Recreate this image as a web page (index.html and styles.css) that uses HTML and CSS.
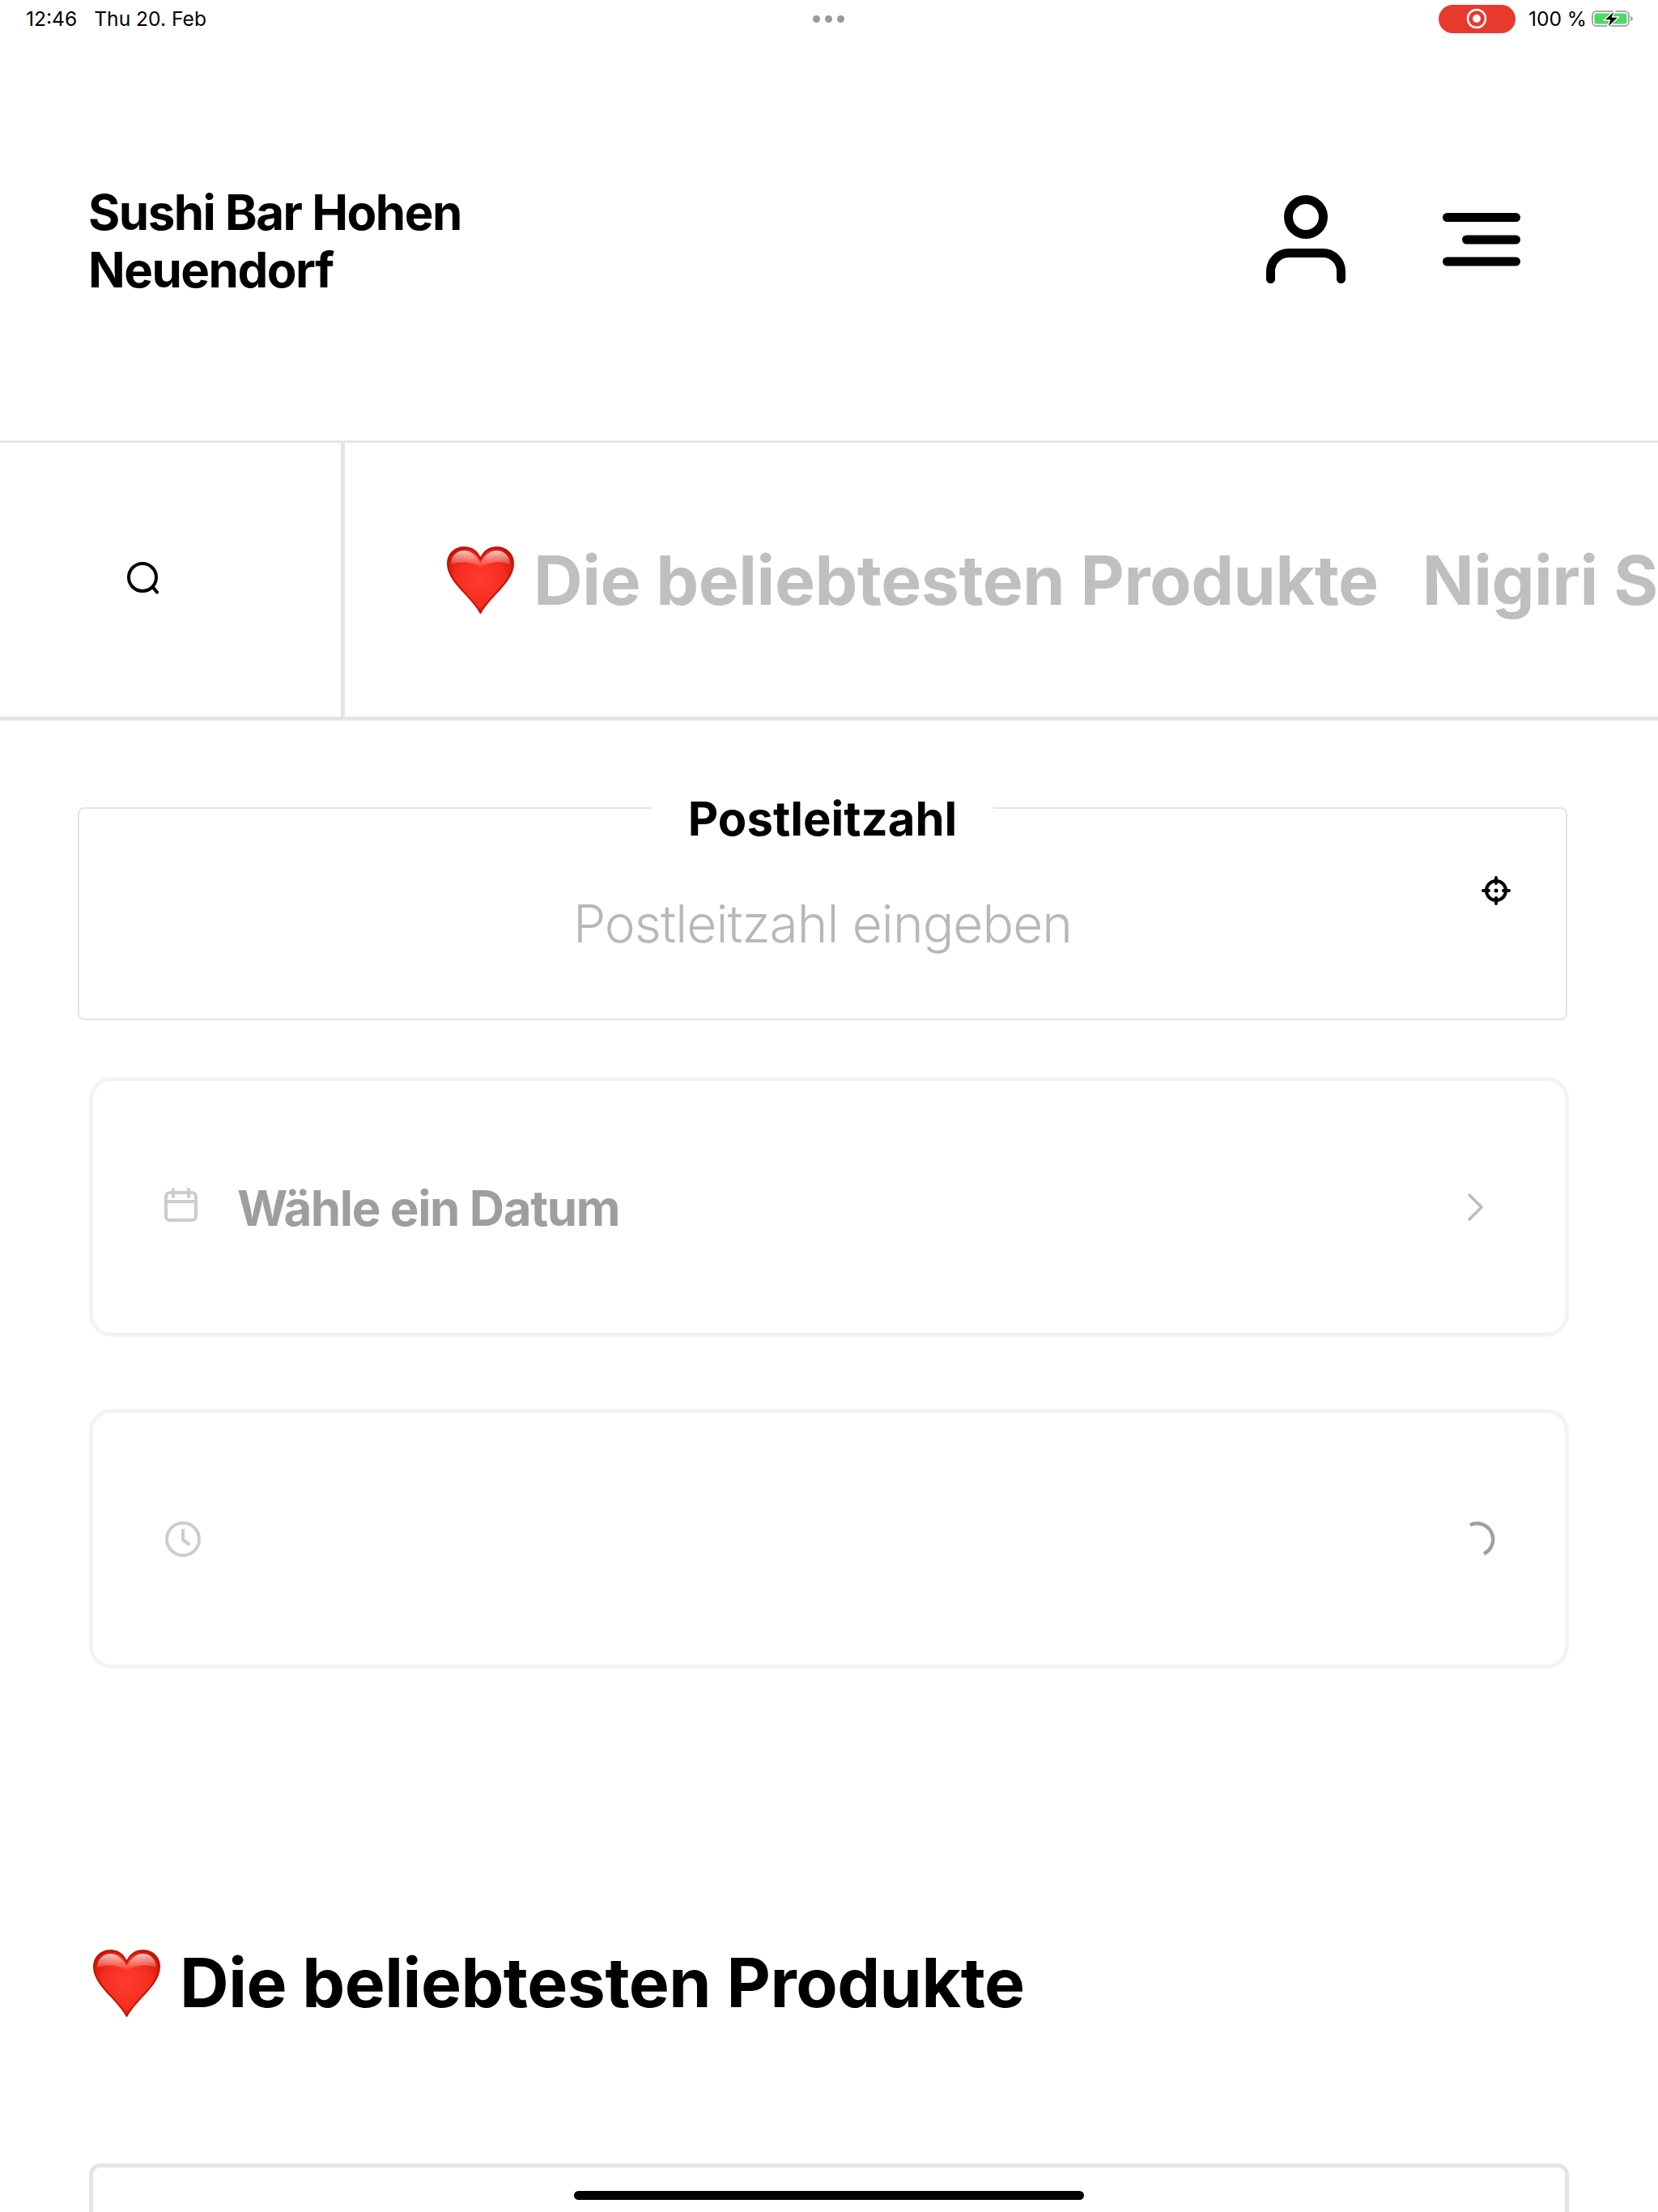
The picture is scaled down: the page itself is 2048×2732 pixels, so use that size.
FILE: index.html
```html
<!DOCTYPE html>
<html lang="de">
<head>
<meta charset="utf-8">
<title>Sushi Bar Hohen Neuendorf</title>
<link rel="stylesheet" href="styles.css">
</head>
<body>
<svg class="defs" width="0" height="0" aria-hidden="true">
  <defs>
    <radialGradient id="heartFill" cx="50%" cy="50%" r="62%">
      <stop offset="0" stop-color="#ff3b30"/>
      <stop offset="0.6" stop-color="#f52d20"/>
      <stop offset="1" stop-color="#c41200"/>
    </radialGradient>
    <linearGradient id="heartShine" x1="0" y1="0" x2="0" y2="1">
      <stop offset="0" stop-color="#fff" stop-opacity="0.75"/>
      <stop offset="1" stop-color="#fff" stop-opacity="0"/>
    </linearGradient>
    <symbol id="heart" viewBox="0 0 82 82">
      <path fill="url(#heartFill)" stroke="#c41200" stroke-width="2" d="M41 81C31 61 1 43 1 21 1 9 10 1 21 1c9 0 16 5 20 14C45 6 52 1 61 1c11 0 20 8 20 20 0 22-30 40-40 60Z"/>
      <path fill="url(#heartShine)" d="M5 22C5 11 13 5 21 5c9 0 15 6 20 15C46 11 52 5 61 5c8 0 16 6 16 17C64 17 52 18 41 26 30 18 18 17 5 22Z"/>
    </symbol>
  </defs>
</svg>
<div class="app">
  <div class="status">
    <div class="status-left"><span>12:46</span><span>Thu 20. Feb</span></div>
    <div class="status-dots"><i></i><i></i><i></i></div>
    <div class="status-right">
      <div class="rec">
        <svg width="26" height="26" viewBox="0 0 26 26"><circle cx="13" cy="13" r="11" fill="none" stroke="#fff" stroke-width="2.5"/><circle cx="13" cy="13" r="5" fill="#fff"/></svg>
      </div>
      <span class="pct">100 %</span>
      <svg class="batt" width="52" height="26" viewBox="0 0 52 26">
        <rect x="1" y="4" width="45" height="18" rx="5" fill="none" stroke="#a8a8a8" stroke-width="2"/>
        <rect x="3.500" y="6.500" width="40" height="13" rx="2.500" fill="#4cd964"/>
        <path d="M48 10c2 .5 3 1.500 3 3s-1 2.500-3 3Z" fill="#a8a8a8"/>
        <path d="M29.500 2 15 15h7.500L19 25l14.500-14h-8l4-9Z" fill="#000" stroke="#fff" stroke-width="1.500" stroke-linejoin="round"/>
      </svg>
    </div>
  </div>

  <header class="header">
    <h1 class="brand">Sushi Bar Hohen Neuendorf</h1>
    <div class="header-icons">
      <svg width="120" height="120" viewBox="0 0 120 120" fill="none" stroke="#000" stroke-width="11" stroke-linecap="round">
        <circle cx="60" cy="32" r="21.500"/>
        <path d="M16.500 108.500v-9.500a22.500 22.500 0 0 1 22.500-22.500h42a22.500 22.500 0 0 1 22.500 22.500v9.500"/>
      </svg>
      <svg width="120" height="120" viewBox="0 0 120 120" fill="none" stroke="#000" stroke-width="11" stroke-linecap="round">
        <path d="M17.500 32.500h85M41.500 60h61M17.500 87h85"/>
      </svg>
    </div>
  </header>

  <nav class="nav">
    <div class="nav-search">
      <svg width="42" height="42" viewBox="0 0 42 42" fill="none" stroke="#000" stroke-width="4" stroke-linecap="round">
        <circle cx="20" cy="20" r="17"/><path d="M33 32.500l5 6"/>
      </svg>
    </div>
    <div class="nav-tabs">
      <div class="tab"><svg class="heart"><use href="#heart"/></svg><span>Die beliebtesten Produkte</span></div>
      <div class="tab"><span>Nigiri Sushi</span></div>
    </div>
  </nav>

  <main class="main">
    <fieldset class="zip">
      <legend class="zip-label">Postleitzahl</legend>
      <input class="zip-input" type="text" placeholder="Postleitzahl eingeben">
      <svg class="zip-target" width="36" height="36" viewBox="0 0 36 36" fill="none" stroke="#000" stroke-width="4" stroke-linecap="round">
        <circle cx="18" cy="18" r="12"/>
        <path d="M18 2v7M18 27v7M2 18h7M27 18h7"/>
        <circle cx="18" cy="18" r="2.500" fill="#000" stroke="none"/>
      </svg>
    </fieldset>

    <div class="picker">
      <svg class="picker-icon icon-calendar" width="44" height="44" viewBox="0 0 44 44" fill="none" stroke="#cccccc" stroke-width="4" stroke-linecap="round">
        <rect x="4" y="6" width="37" height="34" rx="5"/><path d="M4 17h37M13 2v9M32 2v9"/>
      </svg>
      <span class="picker-text">Wähle ein Datum</span>
      <svg class="picker-end end-chevron" width="44" height="44" viewBox="0 0 44 44" fill="none" stroke="#bbbbbb" stroke-width="3.500" stroke-linecap="round" stroke-linejoin="round">
        <path d="M15 7l15 15-15 15"/>
      </svg>
    </div>

    <div class="picker">
      <svg class="picker-icon icon-clock" width="44" height="44" viewBox="0 0 44 44" fill="none" stroke="#cccccc" stroke-width="4" stroke-linecap="round" stroke-linejoin="round">
        <circle cx="22" cy="22" r="20"/><path d="M22 11v12l7 5"/>
      </svg>
      <svg class="picker-end end-spinner" width="44" height="44" viewBox="0 0 44 44" fill="none" stroke="#a0a0a0" stroke-width="4.500">
        <path d="M12 4.500A19 19 0 0 1 29 40"/>
      </svg>
    </div>

    <h2 class="section-title"><svg class="heart"><use href="#heart"/></svg><span>Die beliebtesten Produkte</span></h2>

    <div class="product"></div>
  </main>

  <div class="home-bar"></div>
</div>
</body>
</html>
```

FILE: styles.css
```css
* { box-sizing: border-box; }
html, body { margin: 0; padding: 0; background: #fff; }
body { font-family: Inter, "Liberation Sans", sans-serif; color: #000; }
.defs { position: absolute; }
.app { position: relative; width: 2048px; height: 2732px; overflow: hidden; background: #fff; }

.status { position: relative; display: flex; align-items: center; justify-content: space-between; height: 48px; padding: 0 30px 2px 32px; font-size: 24.600px; }
.status-left { display: flex; gap: 21px; }
.status-dots { position: absolute; left: 1004px; top: 19px; display: flex; gap: 6px; }
.status-dots i { width: 9px; height: 9px; border-radius: 50%; background: #9a9a9a; }
.status-right { display: flex; align-items: center; }
.rec { display: flex; align-items: center; justify-content: center; width: 95px; height: 35px; border-radius: 18px; background: #e8392f; }
.pct { margin-left: 16px; }
.batt { margin-left: 6px; }

.header { display: flex; align-items: center; justify-content: space-between; height: 499px; padding: 0 158px 0 109px; border-bottom: 3px solid #e6e6e6; }
.brand { width: 500px; margin: 0; padding-top: 3px; font-size: 60px; line-height: 71px; font-weight: 650; letter-spacing: -1.500px; }
.header-icons { display: flex; gap: 97px; }

.nav { display: flex; height: 343px; border-bottom: 5px solid #e4e4e4; }
.nav-search { display: flex; align-items: center; width: 426px; padding: 0 0 4px 156px; border-right: 5px solid #e4e4e4; }
.nav-tabs { display: flex; flex: 1; align-items: center; gap: 54px; min-width: 0; padding-left: 126px; overflow: hidden; white-space: nowrap; font-size: 84px; font-weight: 700; color: #bfbfbf; letter-spacing: -0.5px; }
.tab { display: flex; align-items: center; gap: 24px; }
.heart { width: 83px; height: 83px; flex: none; }

.main { display: flex; flex-direction: column; padding-top: 107px; }
.zip { position: relative; height: 263px; margin: 0 112px 0 96px; padding: 0; border: 2px solid #e5e5e5; border-radius: 8px; }
.zip-label { height: 2px; margin: 0 auto; padding: 0 45px; font-size: 58px; line-height: 28px; font-weight: 650; }
.zip-input { display: block; width: 100%; height: 220px; margin-top: 31px; padding: 0; border: 0; outline: 0; background: none; font: 300 64px Inter, sans-serif; letter-spacing: -0.9px; text-align: center; }
.zip-input::placeholder { color: #b8b8b8; opacity: 1; }
.zip-target { position: absolute; top: 83px; right: 68px; }

.picker { display: flex; align-items: center; height: 321px; margin: 70px 110px 0; padding: 0 84px 0 86px; border: 5px solid #f3f3f3; border-radius: 28px; }
.picker + .picker { margin-top: 89px; }
.picker-icon { flex: none; }
.icon-calendar { margin-bottom: 4px; }
.icon-clock { margin-left: 3px; }
.picker-text { margin: 2px 0 0 48px; font-size: 60px; font-weight: 650; color: #9e9e9e; letter-spacing: -1.400px; }
.picker-end { flex: none; margin-left: auto; }
.end-chevron { margin-right: 5px; }
.end-spinner { margin-right: 1px; }

.section-title { display: flex; align-items: center; gap: 24px; margin: 0; padding: 337px 0 0 115px; font-size: 84px; line-height: 102px; font-weight: 700; letter-spacing: -0.5px; }
.product { height: 300px; margin: 172px 110px 0; border: 5px solid #e4e4e4; border-radius: 14px; }

.home-bar { position: absolute; left: 709px; top: 2706px; width: 630px; height: 11px; border-radius: 6px; background: #000; }
```
